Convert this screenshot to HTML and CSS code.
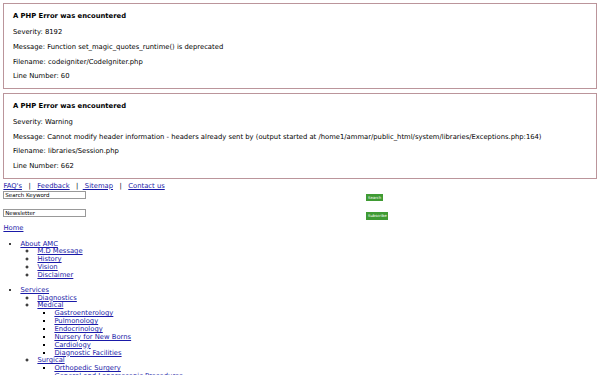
FILE: index.html
```html
<!DOCTYPE html>
<html lang="en">
<head>
    <meta charset="UTF-8">
    <meta name="viewport" content="width=device-width, initial-scale=1.0">
    <title>AMC</title>
    <link rel="stylesheet" href="styles.css">
</head>
<body>
    <div class="php-error">
        <h4>A PHP Error was encountered</h4>
        <p>Severity: 8192</p>
        <p>Message: Function set_magic_quotes_runtime() is deprecated</p>
        <p>Filename: codeigniter/CodeIgniter.php</p>
        <p>Line Number: 60</p>
    </div>

    <div class="php-error">
        <h4>A PHP Error was encountered</h4>
        <p>Severity: Warning</p>
        <p>Message: Cannot modify header information - headers already sent by (output started at /home1/ammar/public_html/system/libraries/Exceptions.php:164)</p>
        <p>Filename: libraries/Session.php</p>
        <p>Line Number: 662</p>
    </div>

    <div class="top-links">
        <a href="#">FAQ's</a> &nbsp; | &nbsp; <a href="#">Feedback</a> &nbsp; | &nbsp;<a href="#"> Sitemap</a> &nbsp; | &nbsp; <a href="#">Contact us</a>
    </div>

    <form class="field-row">
        <input class="text-field" type="text" value="Search Keyword">
        <button class="green-btn" type="button">Search</button>
    </form>

    <form class="field-row">
        <input class="text-field" type="text" value="Newsletter">
        <button class="green-btn" type="button">Subscribe</button>
    </form>

    <div class="home-link"><a href="#">Home</a></div>

    <ul>
        <li><a href="#">About AMC</a>
            <ul>
                <li><a href="#">M.D Message</a></li>
                <li><a href="#">History</a></li>
                <li><a href="#">Vision</a></li>
                <li><a href="#">Disclaimer</a></li>
            </ul>
        </li>
    </ul>

    <ul>
        <li><a href="#">Services</a>
            <ul>
                <li><a href="#">Diagnostics</a></li>
                <li><a href="#">Medical</a>
                    <ul>
                        <li><a href="#">Gastroenterology</a></li>
                        <li><a href="#">Pulmonology</a></li>
                        <li><a href="#">Endocrinology</a></li>
                        <li><a href="#">Nursery for New Borns</a></li>
                        <li><a href="#">Cardiology</a></li>
                        <li><a href="#">Diagnostic Facilities</a></li>
                    </ul>
                </li>
                <li><a href="#">Surgical</a>
                    <ul>
                        <li><a href="#">Orthopedic Surgery</a></li>
                        <li><a href="#">General and Laparoscopic Procedures</a></li>
                        <li><a href="#">Plastic Surgery</a></li>
                    </ul>
                </li>
            </ul>
        </li>
    </ul>
</body>
</html>
```

FILE: styles.css
```css
body {
    zoom: 0.425;
    font-family: "DejaVu Sans", sans-serif;
    font-size: 16px;
    line-height: 18.5px;
    color: #000;
    margin: 8px;
}
a {
    color: #1a1aa8;
}
.php-error {
    border: 1px solid #bb959b;
    padding-left: 20px;
    margin: 0 0 10px 0;
}
.php-error h4 {
    margin: 20px 0;
}
.php-error p {
    margin: 16px 0;
}
.field-row {
    display: flex;
    align-items: flex-start;
    margin: 0 0 18px 0;
}
.text-field {
    width: 195px;
    height: 19px;
    box-sizing: border-box;
    margin: 0;
    padding: 0 2px;
    border: 1px solid #999;
    font-family: "DejaVu Sans", sans-serif;
    font-size: 13px;
    color: #000;
}
.green-btn {
    margin: 8px 0 0 659px;
    height: 17px;
    padding: 0 4px;
    border: none;
    background-color: #3f9b33;
    color: #fff;
    font-family: "DejaVu Sans", sans-serif;
    font-size: 9px;
}
.home-link {
    margin-top: -5px;
}
.home-link + ul {
    margin-top: 18px;
}
```
